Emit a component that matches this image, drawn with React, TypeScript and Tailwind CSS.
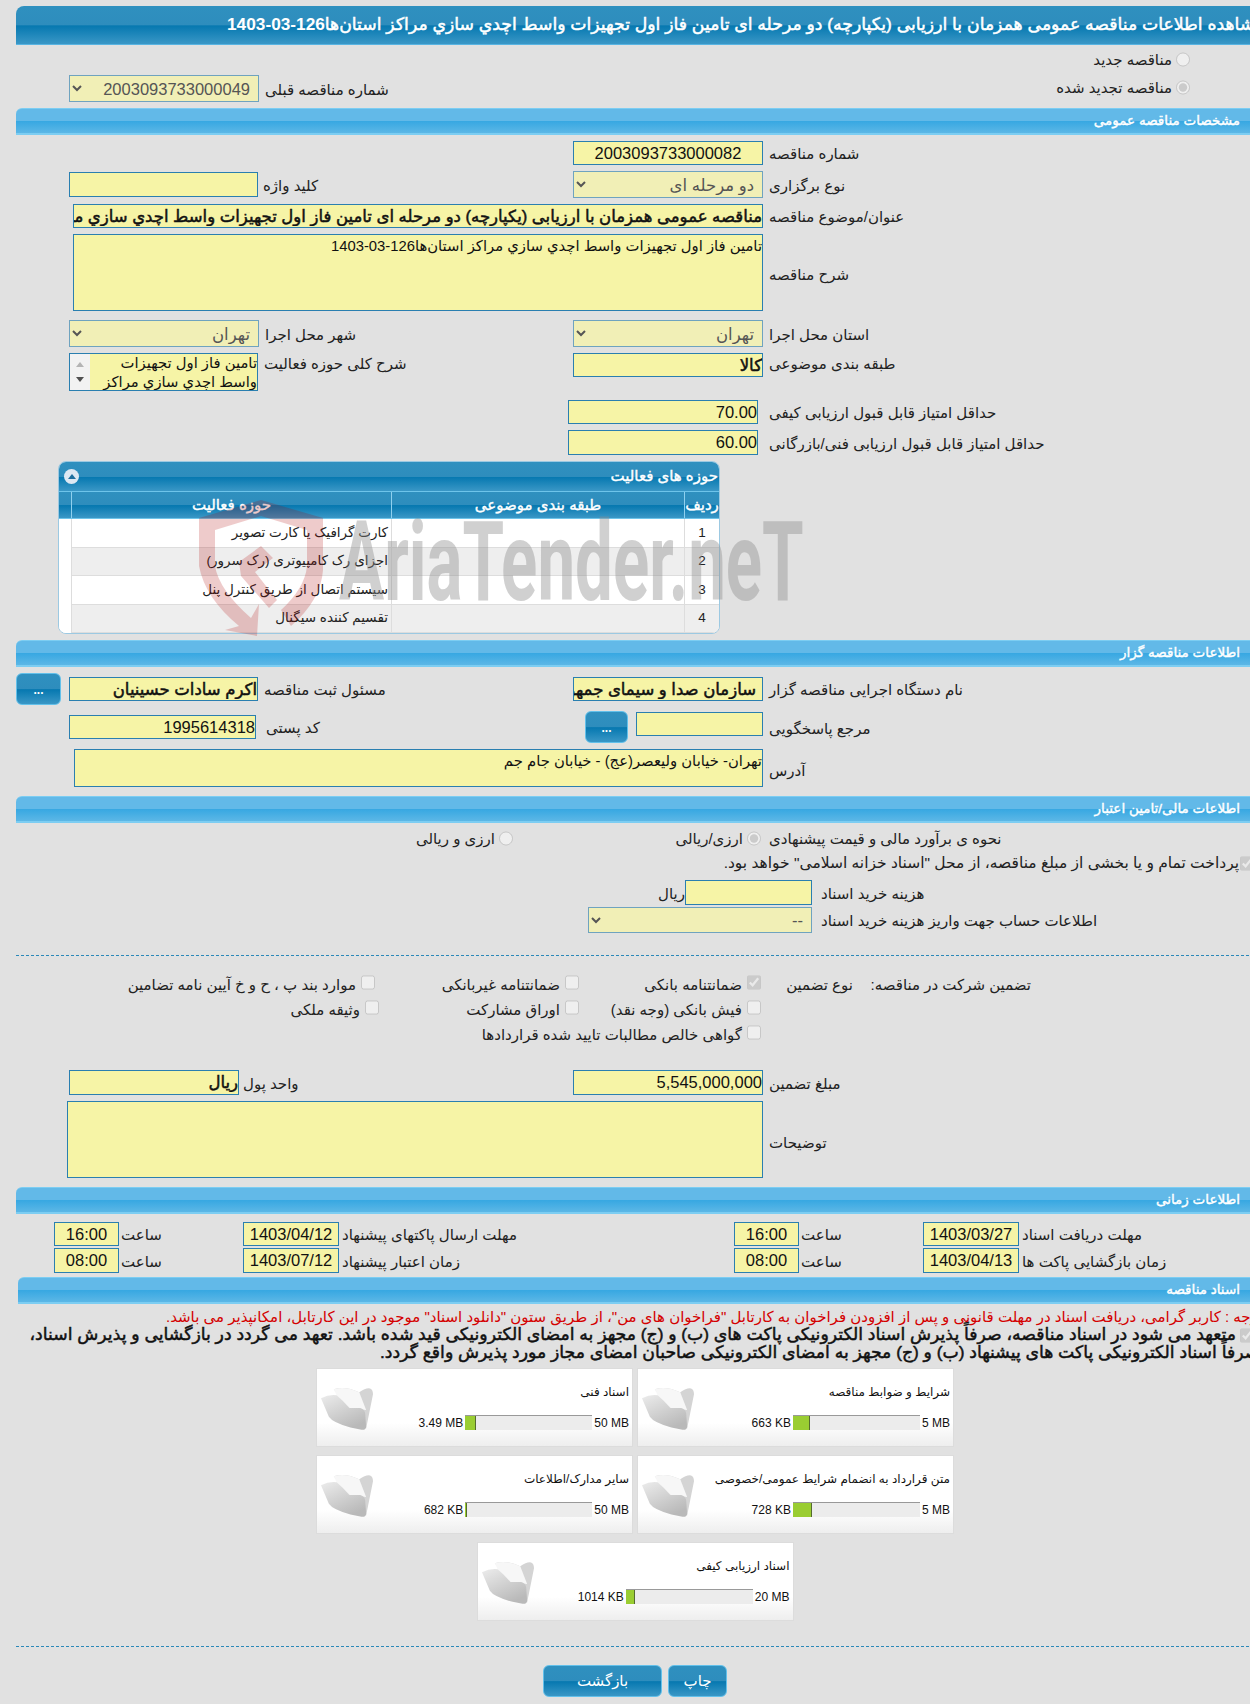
import React from "react";

const titleGrad = "bg-[linear-gradient(180deg,#2f90bf_0%,#2e8dbd_50%,#0678b0_52%,#3a97c6_100%)]";
const inputBase = "block min-w-0 border border-[#2a7fb0] bg-[#f6f4a6] text-[#111] outline-none";
const big = " text-[16.5px] leading-none";
const bold = " text-[16.5px] leading-none [-webkit-text-stroke:0.5px]";
const area = " text-[14.8px] leading-[22px]";
const fake = "font-normal [-webkit-text-stroke:0.4px]";

const Label = ({ children, className = "" }: { children: React.ReactNode; className?: string }) => (
  <span dir="rtl" className={"whitespace-nowrap pt-[2px] text-[15px] leading-[18px] text-[#222] " + className}>
    {children}
  </span>
);

const Section = ({ children, className = "" }: { children: React.ReactNode; className?: string }) => (
  <div
    dir="rtl"
    className={
      "flex h-[27px] items-center rounded-tl-[6px] border-b-2 border-t border-[#7ccdf2] bg-[linear-gradient(180deg,#62b9e8_0%,#62b9e8_50%,#38a8e2_52%,#5cb7e6_100%)] pr-[14px] text-[13.5px] text-white " +
      fake +
      " " +
      className
    }
  >
    {children}
  </div>
);

const Sel = ({ value, className = "" }: { value: string; className?: string }) => (
  <select
    disabled
    dir="rtl"
    className={"block border border-[#6fa3bf] bg-[#f1efb6] px-[4px] text-[16.5px] text-[#555] " + className}
  >
    <option>{value}</option>
  </select>
);

const Blue = ({ className = "" }: { className?: string }) => (
  <button
    className={
      "flex shrink-0 items-end justify-center rounded-[6px] border border-[#62c0ea] pb-[8px] text-[12px] font-bold leading-none text-white " +
      titleGrad +
      " " +
      className
    }
  >
    ...
  </button>
);

const Folder = ({ id }: { id: string }) => (
  <svg width="52" height="46" viewBox="0 0 53 46" className="shrink-0">
    <defs>
      <linearGradient id={id} x1="0" y1="0" x2="0.6" y2="1">
        <stop offset="0" stopColor="#ececec" />
        <stop offset="1" stopColor="#b9b9b9" />
      </linearGradient>
    </defs>
    <path d="M13 4 Q24 0 39 7 Q46 2 50 3 Q53 4 53 9 L46 44 L30 24 Z" fill="#d4d4d4" />
    <path d="M13 4 Q24 0 39 7 L46 25 L29 23 L16 10 Z" fill="#f7f7f7" />
    <path
      d="M0 13 Q8 9 16 10 Q22 15 29 23 L40 23 Q44 24 45 28 L46 42 Q46 46 40 45 L30 43 Q12 38 8 32 Z"
      fill={`url(#${id})`}
    />
  </svg>
);

const Card = ({
  id,
  title,
  used,
  max,
  fill,
}: {
  id: string;
  title: string;
  used: string;
  max: string;
  fill: string;
}) => (
  <div className="flex h-[79px] w-[317px] border border-[#dcdcdc] bg-[linear-gradient(180deg,#ffffff_0%,#ffffff_70%,#eeeeee_100%)] pl-[4px] pr-[3px]">
    <div className="pt-[16px]">
      <Folder id={id} />
    </div>
    <div className="flex min-w-0 flex-1 flex-col items-end pt-[14px]">
      <span dir="rtl" className="h-[18px] whitespace-nowrap text-[12px] leading-[18px] text-[#111]">
        {title}
      </span>
      <div className="mt-[14px] flex h-[15px] items-center text-[12px] text-[#111]">
        <span className="mr-[2px] whitespace-nowrap">{used}</span>
        <div className="h-[15px] w-[127px] border-t border-[#999] bg-[#ececec]">
          <div className={"h-full border-r border-[#556b2f] bg-[#9acd32] " + fill} />
        </div>
        <span className="ml-[2px] whitespace-nowrap">{max}</span>
      </div>
    </div>
  </div>
);

const rows = [
  { n: "1", t: "کارت گرافیک یا کارت تصویر", bg: "bg-white" },
  { n: "2", t: "اجزای رک کامپیوتری (رک سرور)", bg: "bg-[#eeeeee]" },
  { n: "3", t: "سیستم اتصال از طریق کنترل پنل", bg: "bg-white" },
  { n: "4", t: "تقسیم کننده سیگنال", bg: "bg-[#eeeeee]" },
];

const Check = ({ checked = false }: { checked?: boolean }) => (
  <input type="checkbox" disabled checked={checked} readOnly className="m-0 h-[15px] w-[14px] shrink-0" />
);
const Radio = ({ checked = false }: { checked?: boolean }) => (
  <input type="radio" disabled checked={checked} readOnly className="m-0 h-[15px] w-[14px] shrink-0" />
);

const CheckCell = ({ text, checked, cls = "" }: { text: string; checked?: boolean; cls?: string }) => (
  <div className={"flex items-center justify-end gap-[5px] " + cls}>
    <Label>{text}</Label>
    <span className="-mt-[4px] flex">
      <Check checked={checked} />
    </span>
  </div>
);

const Time = ({ l1, v1, l2, v2, h }: { l1: string; v1: string; l2: string; v2: string; h: string }) => (
  <>
    <div className={"flex items-center gap-[2px] " + h}>
      <input readOnly dir="ltr" value={v1} className={inputBase + big + " h-full w-[65px] text-center"} />
      <Label>{l1}</Label>
    </div>
    <div className={"flex items-center gap-[3px] " + h}>
      <input readOnly dir="ltr" value={v2} className={inputBase + big + " h-full w-[96px] text-center"} />
      <Label>{l2}</Label>
    </div>
  </>
);

export default function App() {
  return (
    <div className="relative h-[1704px] w-[1250px] overflow-hidden bg-[#e1e1e1] font-['Liberation_Sans','DejaVu_Sans',sans-serif]">
      <div className="w-[1254px]">
        {/* title */}
        <div
          className={
            "ml-[16px] mt-[6px] flex h-[39px] items-center overflow-hidden rounded-tl-[8px] border-b border-[#58b4e2] pl-[211px] " +
            titleGrad
          }
        >
          <span dir="rtl" className="shrink-0 whitespace-nowrap text-[17.25px] text-white [-webkit-text-stroke:0.5px]">
            مشاهده اطلاعات مناقصه عمومی همزمان با ارزیابی (یکپارچه) دو مرحله ای تامین فاز اول تجهیزات واسط اچدي سازي مراكز استان‌ها
            <span className="font-bold [-webkit-text-stroke:0px]">126-03-1403</span>
          </span>
        </div>

        {/* renew */}
        <div className="mt-[2px] flex h-[24px] items-center justify-end gap-[4px] pr-[64px]">
          <Label>مناقصه جدید</Label>
          <Radio />
        </div>
        <div className="mt-[4px] flex h-[27px] items-center justify-between pl-[69px] pr-[64px]">
          <div className="flex h-full items-center gap-[6px]">
            <Sel value="2003093733000049" className="h-full w-[190px]" />
            <Label>شماره مناقصه قبلی</Label>
          </div>
          <div className="flex items-center gap-[4px] pb-[3px]">
            <Label>مناقصه تجدید شده</Label>
            <Radio checked />
          </div>
        </div>

        <Section className="ml-[16px] mt-[6px]">مشخصات مناقصه عمومی</Section>

        <div className="ml-[573px] mt-[6px] flex h-[24px] items-center gap-[6px]">
          <input readOnly dir="ltr" value="2003093733000082" className={inputBase + big + " h-full w-[190px] text-center"} />
          <Label>شماره مناقصه</Label>
        </div>

        <div className="mt-[6px] grid h-[27px] grid-cols-[573px_1fr] items-center">
          <div className="ml-[69px] flex h-[25px] items-center gap-[5px]">
            <input readOnly className={inputBase + big + " h-full w-[189px]"} />
            <Label>کلید واژه</Label>
          </div>
          <div className="flex h-full items-center gap-[6px]">
            <Sel value="دو مرحله ای" className="h-full w-[190px]" />
            <Label>نوع برگزاری</Label>
          </div>
        </div>

        <div className="ml-[73px] mt-[6px] flex h-[24px] items-center gap-[6px]">
          <input
            readOnly
            dir="rtl"
            value="مناقصه عمومی همزمان با ارزیابی (یکپارچه) دو مرحله ای تامین فاز اول تجهیزات واسط اچدي سازي مراكز استان‌ها126-03-1403"
            className={inputBase + bold + " h-full w-[690px]"}
          />
          <Label>عنوان/موضوع مناقصه</Label>
        </div>

        <div className="ml-[73px] mt-[6px] flex h-[77px] items-center gap-[6px]">
          <textarea
            readOnly
            dir="rtl"
            value="تامین فاز اول تجهیزات واسط اچدي سازي مراكز استان‌ها126-03-1403"
            className={inputBase + area + " h-full w-[690px] resize-none"}
          />
          <Label className="mt-[2px]">شرح مناقصه</Label>
        </div>

        <div className="mt-[9px] grid h-[27px] grid-cols-[573px_1fr] items-center">
          <div className="ml-[69px] flex h-full items-center gap-[6px]">
            <Sel value="تهران" className="h-full w-[190px]" />
            <Label>شهر محل اجرا</Label>
          </div>
          <div className="flex h-full items-center gap-[6px]">
            <Sel value="تهران" className="h-full w-[190px]" />
            <Label>استان محل اجرا</Label>
          </div>
        </div>

        <div className="mt-[6px] grid h-[38px] grid-cols-[573px_1fr] items-start">
          <div className="ml-[69px] flex h-[38px] items-start gap-[6px]">
            <div className="flex h-[38px] w-[189px] border border-[#2a7fb0] bg-[#f6f4a6]">
              <div className="flex w-[20px] shrink-0 flex-col items-center justify-between bg-[#f2f2f2] py-[8px]">
                <div className="h-0 w-0 border-x-[4px] border-b-[5px] border-x-transparent border-b-[#b4b4b4]" />
                <div className="h-0 w-0 border-x-[4px] border-t-[5px] border-x-transparent border-t-[#505050]" />
              </div>
              <div dir="rtl" className="h-full min-w-0 flex-1 overflow-hidden text-[14.8px] leading-[18.5px] text-[#111]">
                تامین فاز اول تجهیزات واسط اچدي سازي مراكز
              </div>
            </div>
            <Label>شرح کلی حوزه فعالیت</Label>
          </div>
          <div className="flex items-start gap-[6px]">
            <input readOnly dir="rtl" value="کالا" className={inputBase + bold + " h-[24px] w-[190px]"} />
            <Label>طبقه بندی موضوعی</Label>
          </div>
        </div>

        <div className="ml-[568px] mt-[9px] flex h-[24px] items-center gap-[11px]">
          <input readOnly dir="rtl" value="70.00" className={inputBase + big + " h-full w-[190px]"} />
          <Label>حداقل امتیاز قابل قبول ارزیابی کیفی</Label>
        </div>
        <div className="ml-[568px] mt-[6px] flex h-[25px] items-center gap-[11px]">
          <input readOnly dir="rtl" value="60.00" className={inputBase + big + " h-full w-[190px]"} />
          <Label>حداقل امتیاز قابل قبول ارزیابی فنی/بازرگانی</Label>
        </div>

        {/* panel */}
        <div className="ml-[58px] mt-[6px] h-[173px] w-[662px] overflow-hidden rounded-[8px] border border-[#9cc9e2] bg-white">
          <div className={"flex h-[29px] items-center justify-between pl-[5px] pr-[1px] " + titleGrad}>
            <div className="flex h-[15px] w-[15px] items-center justify-center rounded-full bg-[#dde8f3]">
              <div className="h-0 w-0 border-x-[4px] border-b-[5px] border-x-transparent border-b-[#1f6f9f]" />
            </div>
            <span dir="rtl" className={"text-[15px] text-white " + fake}>
              حوزه های فعالیت
            </span>
          </div>
          <div
            className={
              "grid h-[28px] grid-cols-[12px_320px_293px_1fr] border-b border-t border-[#6ec4ea] text-[15px] text-white " +
              fake +
              " " +
              titleGrad
            }
          >
            <div />
            <div dir="rtl" className="flex items-center justify-center border-l border-[#8fd0ee]">
              حوزه فعالیت
            </div>
            <div dir="rtl" className="flex items-center justify-center border-l border-[#8fd0ee]">
              طبقه بندی موضوعی
            </div>
            <div dir="rtl" className="flex items-center justify-center border-l border-[#8fd0ee]">
              ردیف
            </div>
          </div>
          {rows.map((r) => (
            <div key={r.n} className="grid h-[28.5px] grid-cols-[12px_320px_293px_1fr] text-[13.5px] text-[#222]">
              <div className="bg-white" />
              <div dir="rtl" className={"flex items-center border-b border-l border-[#dddddd] pr-[3px] " + r.bg}>
                {r.t}
              </div>
              <div className={"border-b border-l border-[#dddddd] " + r.bg} />
              <div className={"flex items-center justify-center border-b border-l border-[#dddddd] " + r.bg}>
                {r.n}
              </div>
            </div>
          ))}
        </div>

        <Section className="ml-[16px] mt-[6px]">اطلاعات مناقصه گزار</Section>

        <div className="mt-[6px] grid h-[32px] grid-cols-[573px_1fr] items-center">
          <div className="ml-[16px] flex h-full items-center">
            <Blue className="h-[32px] w-[45px]" />
            <input
              readOnly
              dir="rtl"
              value="اکرم سادات حسینیان"
              className={inputBase + bold + " ml-[8px] h-[24px] w-[189px]"}
            />
            <Label className="ml-[6px]">مسئول ثبت مناقصه</Label>
          </div>
          <div className="flex items-center gap-[6px]">
            <input
              readOnly
              dir="rtl"
              value="سازمان صدا و سیمای جمهوری اسلامی ایران"
              className={inputBase + bold + " h-[24px] w-[190px] pr-[6px]"}
            />
            <Label>نام دستگاه اجرایی مناقصه گزار</Label>
          </div>
        </div>

        <div className="mt-[6px] grid h-[32px] grid-cols-[573px_1fr] items-center">
          <div className="ml-[69px] flex items-center gap-[10px]">
            <input readOnly dir="rtl" value="1995614318" className={inputBase + big + " h-[24px] w-[187px]"} />
            <Label>کد پستی</Label>
          </div>
          <div className="ml-[12px] flex h-full items-start gap-[8px]">
            <Blue className="h-[32px] w-[43px]" />
            <div className="flex items-start gap-[6px] pt-[1px]">
              <input readOnly className={inputBase + big + " h-[24px] w-[127px]"} />
              <Label className="mt-[6px]">مرجع پاسخگویی</Label>
            </div>
          </div>
        </div>

        <div className="ml-[74px] mt-[6px] flex h-[38px] items-center gap-[6px]">
          <textarea
            readOnly
            dir="rtl"
            value="تهران- خیابان ولیعصر(عج) - خیابان جام جم"
            className={inputBase + area + " h-full w-[689px] resize-none"}
          />
          <Label className="mt-[3px]">آدرس</Label>
        </div>

        <Section className="ml-[16px] mt-[9px]">اطلاعات مالی/تامین اعتبار</Section>

        <div className="mt-[5px] flex h-[20px] items-center">
          <div className="ml-[420px] flex w-[93px] items-center justify-end gap-[4px]">
            <Label>ارزی و ریالی</Label>
            <Radio />
          </div>
          <div className="ml-[164px] flex w-[84px] items-center justify-end gap-[4px]">
            <Label>ارزی/ریالی</Label>
            <Radio checked />
          </div>
          <Label className="ml-[8px]">نحوه ی برآورد مالی و قیمت پیشنهادی</Label>
        </div>

        <div className="mt-[5px] flex h-[20px] items-center justify-end gap-[1px]">
          <span dir="rtl" className="whitespace-nowrap text-[15.5px] text-[#222]">
            پرداخت تمام و یا بخشی از مبلغ مناقصه، از محل "اسناد خزانه اسلامی" خواهد بود.
          </span>
          <Check checked />
        </div>

        <div className="ml-[662px] mt-[7px] flex h-[25px] items-center">
          <Label className="w-[23px]">ریال</Label>
          <input readOnly className={inputBase + big + " h-full w-[127px]"} />
          <Label className="ml-[9px]">هزینه خرید اسناد</Label>
        </div>

        <div className="ml-[588px] mt-[2px] flex h-[26px] items-center gap-[9px]">
          <Sel value="--" className="h-full w-[224px]" />
          <Label>اطلاعات حساب جهت واریز هزینه خرید اسناد</Label>
        </div>

        <div className="ml-[16px] mt-[22px] border-t border-dashed border-[#2b88b8]" />

        {/* guarantees */}
        <div className="mt-[18px] grid grid-cols-[375px_204px_182px_92px_178px] grid-rows-[20px_20px_20px] gap-y-[5px]">
          <CheckCell text="موارد بند پ ، ح و خ آیین نامه تضامین" />
          <CheckCell text="ضمانتنامه غیربانکی" />
          <CheckCell text="ضمانتنامه بانکی" checked />
          <div className="flex items-center justify-end">
            <Label>نوع تضمین</Label>
          </div>
          <div className="flex items-center justify-end">
            <Label>تضمین شرکت در مناقصه:</Label>
          </div>
          <CheckCell text="وثیقه ملکی" cls="-mr-[4px]" />
          <CheckCell text="اوراق مشارکت" />
          <CheckCell text="فیش بانکی (وجه نقد)" />
          <div />
          <div />
          <CheckCell text="گواهی خالص مطالبات تایید شده قراردادها" cls="col-start-1 col-end-4" />
        </div>

        <div className="mt-[26px] grid h-[25px] grid-cols-[573px_1fr] items-center">
          <div className="ml-[69px] flex h-full items-center gap-[4px]">
            <input readOnly dir="rtl" value="ریال" className={inputBase + bold + " h-full w-[170px]"} />
            <Label>واحد پول</Label>
          </div>
          <div className="flex h-full items-center gap-[6px]">
            <input readOnly dir="rtl" value="5,545,000,000" className={inputBase + big + " h-full w-[190px]"} />
            <Label>مبلغ تضمین</Label>
          </div>
        </div>

        <div className="ml-[67px] mt-[6px] flex h-[77px] items-center gap-[6px]">
          <textarea readOnly className={inputBase + area + " h-full w-[696px] resize-none"} />
          <Label className="mt-[4px]">توضیحات</Label>
        </div>

        <Section className="ml-[16px] mt-[9px]">اطلاعات زمانی</Section>

        <div className="ml-[54px] mt-[8px] grid grid-cols-[189px_491px_189px_1fr]">
          <Time h="h-[24px]" v1="16:00" l1="ساعت" v2="1403/04/12" l2="مهلت ارسال پاکتهای پیشنهاد" />
          <Time h="h-[24px]" v1="16:00" l1="ساعت" v2="1403/03/27" l2="مهلت دریافت اسناد" />
        </div>
        <div className="ml-[54px] mt-[2px] grid grid-cols-[189px_491px_189px_1fr]">
          <Time h="h-[25px]" v1="08:00" l1="ساعت" v2="1403/07/12" l2="زمان اعتبار پیشنهاد" />
          <Time h="h-[25px]" v1="08:00" l1="ساعت" v2="1403/04/13" l2="زمان بازگشایی پاکت ها" />
        </div>

        <Section className="ml-[18px] mt-[4px]">اسناد مناقصه</Section>

        <div className="mt-[3px] flex h-[20px] items-center pl-[166px]">
          <span dir="rtl" className="shrink-0 whitespace-nowrap text-[15px] text-[#d40000]">
            توجه : کاربر گرامی، دریافت اسناد در مهلت قانونی و پس از افزودن فراخوان به کارتابل "فراخوان های من"، از طریق ستون "دانلود اسناد" موجود در این کارتابل، امکانپذیر می باشد.
          </span>
        </div>
        <div className="-mt-[1px] flex h-[18px] items-center justify-end gap-[4px]">
          <span dir="rtl" className="whitespace-nowrap text-[17.25px] text-[#111] [-webkit-text-stroke:0.5px]">
            متعهد می شود در اسناد مناقصه، صرفاً پذیرش اسناد الکترونیکی پاکت های (ب) و (ج) مجهز به امضای الکترونیکی قید شده باشد. تعهد می گردد در بازگشایی و پذیرش اسناد،
          </span>
          <Check checked />
        </div>
        <div className="flex h-[18px] items-center pl-[380px]">
          <span dir="rtl" className="shrink-0 whitespace-nowrap text-[17.25px] text-[#111] [-webkit-text-stroke:0.5px]">
            صرفاً اسناد الکترونیکی پاکت های پیشنهاد (ب) و (ج) مجهز به امضای الکترونیکی صاحبان امضای مجاز مورد پذیرش واقع گردد.
          </span>
        </div>

        {/* cards */}
        <div className="ml-[16px] mt-[6px] flex flex-col items-center gap-[8px]">
          <div className="flex gap-[4px]">
            <Card id="f1" title="اسناد فنی" used="3.49 MB" max="50 MB" fill="w-[11px]" />
            <Card id="f2" title="شرایط و ضوابط مناقصه" used="663 KB" max="5 MB" fill="w-[17px]" />
          </div>
          <div className="flex gap-[4px]">
            <Card id="f3" title="سایر مدارک/اطلاعات" used="682 KB" max="50 MB" fill="w-[2px]" />
            <Card id="f4" title="متن قرارداد به انضمام شرایط عمومی/خصوصی" used="728 KB" max="5 MB" fill="w-[19px]" />
          </div>
          <Card id="f5" title="اسناد ارزیابی کیفی" used="1014 KB" max="20 MB" fill="w-[9px]" />
        </div>

        <div className="ml-[16px] mt-[25px] border-t border-dashed border-[#2b88b8]" />

        <div className="ml-[16px] mt-[18px] flex justify-center gap-[6px]">
          <button
            className={"h-[32px] w-[119px] rounded-[6px] border border-[#62c0ea] text-[15px] text-white " + titleGrad}
          >
            بازگشت
          </button>
          <button
            className={"h-[32px] w-[59px] rounded-[6px] border border-[#62c0ea] text-[15px] text-white " + titleGrad}
          >
            چاپ
          </button>
        </div>
      </div>

      {/* watermark */}
      <svg
        width="126"
        height="138"
        viewBox="0 0 126 138"
        className="pointer-events-none absolute left-[199px] top-[500px] opacity-[0.2]"
      >
        <path
          d="M62 0 L124 18 L124 70 Q122 100 92 126 L82 110 Q106 88 108 66 L108 30 L62 16 L16 30 L16 66 Q20 90 52 118 L60 104 L58 136 L26 130 L40 126 Q6 98 0 66 L0 18 Z"
          fill="#b00000"
        />
        <path d="M40 62 L62 46 L74 58 L56 72 L78 100 L70 108 L42 76 Z" fill="#b00000" />
      </svg>
      <div className="pointer-events-none absolute left-[339px] top-[506px] origin-left scale-x-[0.6] whitespace-nowrap font-['Roboto',sans-serif] text-[112px] font-bold leading-[112px] text-[#8c8c8c] opacity-[0.4]">
        AriaTender.neT
      </div>
    </div>
  );
}
